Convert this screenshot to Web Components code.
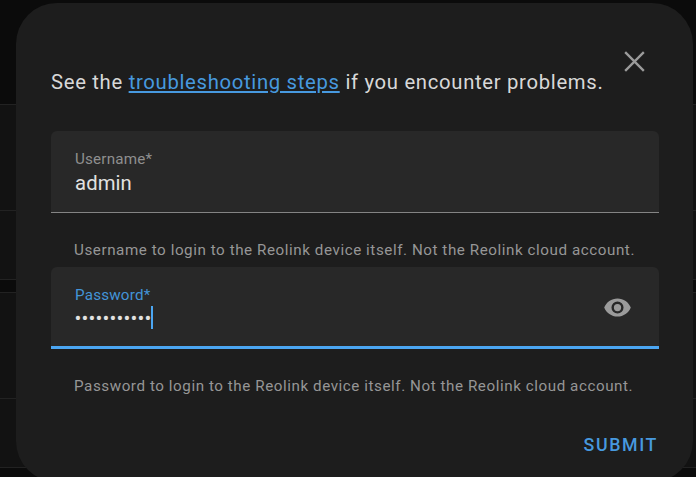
<!DOCTYPE html>
<html lang="en">
<head>
<meta charset="utf-8">
<title>Reolink</title>
<style>
  html, body { height: 100%; }
  body {
    margin: 0;
    overflow: hidden;
    background: #0b0b0b;
    font-family: Roboto, sans-serif;
  }
</style>
</head>
<body>
<config-page></config-page>
<flow-dialog>
  <span slot="intro">See the <a href="#">troubleshooting steps</a> if you encounter problems.</span>
  <text-field label="Username*" value="admin" helper="Username to login to the Reolink device itself. Not the Reolink cloud account."></text-field>
  <text-field label="Password*" value="•••••••••••" secret focused helper="Password to login to the Reolink device itself. Not the Reolink cloud account."></text-field>
  <submit-button slot="action">SUBMIT</submit-button>
</flow-dialog>

<script>
// Dimmed page that sits behind the dialog
class ConfigPage extends HTMLElement {
  constructor() {
    super();
    this.attachShadow({ mode: 'open' });
    this.cards = [2, 2];
  }

  connectedCallback() {
    this.shadowRoot.innerHTML = `
      <style>
        :host { display: flex; flex-direction: column; gap: 12px; padding-top: 104px; }
        .card { background: #121212; border-top: 1px solid #222; border-bottom: 1px solid #222; }
        .row { box-sizing: border-box; height: 105px; }
        .row + .row { height: 69px; border-top: 1px solid #222; }
      </style>
      ${this.cards.map(rows => `
        <div class="card">${'<div class="row"></div>'.repeat(rows)}</div>
      `).join('')}
    `;
  }
}

class TextField extends HTMLElement {
  constructor() {
    super();
    this.attachShadow({ mode: 'open' });
  }

  connectedCallback() {
    this.render();
  }

  render() {
    const secret = this.hasAttribute('secret');
    const focused = this.hasAttribute('focused');

    this.shadowRoot.innerHTML = `
      <style>
        :host { display: block; height: 136px; }
        .box {
          box-sizing: border-box;
          display: flex;
          align-items: center;
          justify-content: space-between;
          height: 82px;
          padding: 0 24px;
          background: #282828;
          border-bottom: 1.5px solid #848484;
          border-radius: 6px 6px 0 0;
        }
        :host([focused]) .box { border-bottom: 3px solid #4ba6f2; }
        .text { align-self: flex-start; padding-top: 17px; }
        .label { height: 23px; line-height: 23px; font-size: 15.2px; letter-spacing: 0.2px; color: #8f8f8f; }
        :host([focused]) .label { color: #4394d8; }
        .value { display: flex; align-items: center; height: 24px; font-size: 20.3px; letter-spacing: 0.1px; color: #e1e1e1; }
        .secret { height: 26px; margin-left: -0.5px; line-height: 24px; letter-spacing: 0.15px; }
        .caret { width: 2px; height: 23px; margin-bottom: 3px; background: #4ba6f2; }
        .helper { padding: 25px 23px 0; line-height: 24px; font-size: 15.2px; letter-spacing: 0.56px; white-space: nowrap; color: #969696; }
        svg { width: 29px; height: 29px; margin: 1px 3px 0 0; fill: #9b9b9b; }
      </style>
      <div class="box">
        <div class="text">
          <div class="label">${this.getAttribute('label')}</div>
          <div class="value">
            <span class="${secret ? 'secret' : ''}">${this.getAttribute('value')}</span>
            ${focused ? '<i class="caret"></i>' : ''}
          </div>
        </div>
        ${secret ? `
          <svg viewBox="0 0 24 24"><path d="M12,9A3,3 0 0,0 9,12A3,3 0 0,0 12,15A3,3 0 0,0 15,12A3,3 0 0,0 12,9M12,17A5,5 0 0,1 7,12A5,5 0 0,1 12,7A5,5 0 0,1 17,12A5,5 0 0,1 12,17M12,4.5C7,4.5 2.73,7.61 1,12C2.73,16.39 7,19.5 12,19.5C17,19.5 21.27,16.39 23,12C21.27,7.61 17,4.5 12,4.5Z"/></svg>
        ` : ''}
      </div>
      <div class="helper">${this.getAttribute('helper')}</div>
    `;
  }
}

class SubmitButton extends HTMLElement {
  constructor() {
    super();
    this.attachShadow({ mode: 'open' });
    this.shadowRoot.innerHTML = `
      <style>
        :host { display: block; line-height: 24px; font-size: 17.8px; font-weight: 500; letter-spacing: 1.6px; margin-right: 1px; color: #4799df; cursor: pointer; }
      </style>
      <slot></slot>
    `;
  }
}

class FlowDialog extends HTMLElement {
  constructor() {
    super();
    this.attachShadow({ mode: 'open' });
    this.shadowRoot.innerHTML = `
      <style>
        :host {
          position: absolute;
          top: 3px;
          left: 16px;
          box-sizing: border-box;
          width: 677px;
          height: 479px;
          padding: 0 34px 0 35px;
          border-radius: 41px;
          background: #1d1d1d;
        }
        header { display: flex; justify-content: space-between; height: 128px; }
        .intro { flex: none; width: 560px; padding-top: 67px; line-height: 24px; font-size: 20.3px; letter-spacing: 0.68px; white-space: nowrap; color: #d8d8d8; }
        ::slotted(span) { --link: #4799df; }
        .close { width: 35px; height: 35px; margin: 41px 7px 0 0; flex: none; stroke: #9b9b9b; stroke-width: 1.6; }
        footer { display: flex; justify-content: flex-end; padding-top: 30px; }
      </style>
      <header>
        <div class="intro"><slot name="intro"></slot></div>
        <svg class="close" viewBox="0 0 24 24"><path d="M5.6,5.6L18.4,18.4M18.4,5.6L5.6,18.4"/></svg>
      </header>
      <slot></slot>
      <footer><slot name="action"></slot></footer>
    `;
  }

  connectedCallback() {
    this.querySelectorAll('a').forEach(el => {
      el.style.color = 'var(--link)';
    });
  }
}

customElements.define('config-page', ConfigPage);
customElements.define('text-field', TextField);
customElements.define('submit-button', SubmitButton);
customElements.define('flow-dialog', FlowDialog);
</script>
</body>
</html>
